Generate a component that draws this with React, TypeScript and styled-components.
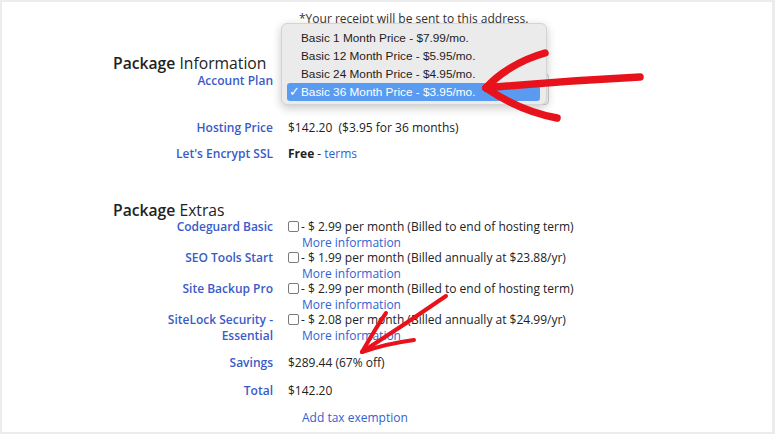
import React from 'react';
import styled, { createGlobalStyle } from 'styled-components';

const GlobalStyle = createGlobalStyle`
    html, body {
        margin: 0;
        padding: 0;
        background: #fff;
    }
    body {
        font-family: "Open Sans", "Liberation Sans", sans-serif;
        color: #222;
    }
`;

const Frame = styled.div`
    position: relative;
    width: 775px;
    height: 434px;
    box-sizing: border-box;
    border-style: solid;
    border-color: #ececec;
    border-width: 2px 3px 2px 2px;
    background: #fff;
    overflow: hidden;
`;

const Content = styled.div`
    padding: 9px 0 0 111px;
    font-size: 12px;
`;

const Row = styled.div<{ $gap?: number; $lh?: number }>`
    display: grid;
    grid-template-columns: 160px 1fr;
    column-gap: 15px;
    margin-top: ${p => p.$gap || 0}px;
    line-height: ${p => p.$lh || 16}px;
`;

const Label = styled.div`
    text-align: right;
    font-weight: 600;
    color: #3a5bc7;
`;

const Value = styled.div`
    color: #222;
`;

const Note = styled.div`
    padding-left: 11px;
    color: #333;
`;

const Heading = styled.h2<{ $gap: number }>`
    margin: ${p => p.$gap}px 0 0 0;
    font-size: 15.7px;
    line-height: 18px;
    font-weight: 400;
    color: #222;

    b {
        font-weight: 600;
    }
`;

const Link = styled.a`
    color: #2f63cf;
    text-decoration: none;
`;

const SelectWrap = styled.div`
    position: relative;
    width: 265px;
    height: 32px;
    margin-left: -4px;
`;

const SelectBox = styled.div`
    box-sizing: border-box;
    height: 100%;
    border: 1px solid #cfcfcf;
    border-radius: 4px;
    background: #fafafa;
    display: flex;
    align-items: center;
    justify-content: flex-end;
    padding-right: 2px;
    font-size: 9px;
`;

const Menu = styled.ul`
    position: absolute;
    top: -50px;
    left: -3px;
    width: 266px;
    box-sizing: border-box;
    margin: 0;
    padding: 5px 6px 3px 5px;
    list-style: none;
    background: #ecebec;
    border: 1px solid #d4d4d4;
    border-radius: 6px;
    box-shadow: 0 3px 10px rgba(0, 0, 0, 0.22);
    font-family: "Liberation Sans", Arial, sans-serif;
    font-size: 11.8px;
`;

const MenuItem = styled.li<{ $selected?: boolean }>`
    position: relative;
    height: 18px;
    line-height: 18px;
    padding-left: 14px;
    border-radius: 3px;
    color: ${p => (p.$selected ? '#fff' : '#1c1c1c')};
    background: ${p => (p.$selected ? '#5a9bf2' : 'transparent')};
`;

const Check = styled.span`
    position: absolute;
    left: 2px;
    top: 0;
    font-size: 12.5px;
`;

const ExtraLine = styled.div`
    display: flex;
    align-items: center;
`;

const Checkbox = styled.span`
    flex: none;
    width: 11px;
    height: 11px;
    box-sizing: border-box;
    border: 1px solid #7a7a7a;
    border-radius: 2px;
    margin-right: 2px;
    background: #fff;
`;

const MoreInfo = styled(Link)`
    display: block;
    padding-left: 14px;
`;

const Annotations = styled.svg`
    position: absolute;
    left: -2px;
    top: -2px;
    pointer-events: none;
`;

type Extra = {
    name: React.ReactNode;
    text: string;
};

const extras: Extra[] = [
    { name: 'Codeguard Basic', text: '- $ 2.99 per month (Billed to end of hosting term)' },
    { name: 'SEO Tools Start', text: '- $ 1.99 per month (Billed annually at $23.88/yr)' },
    { name: 'Site Backup Pro', text: '- $ 2.99 per month (Billed to end of hosting term)' },
    { name: <>SiteLock Security -<br />Essential</>, text: '- $ 2.08 per month (Billed annually at $24.99/yr)' },
];

const plans = [
    'Basic 1 Month Price - $7.99/mo.',
    'Basic 12 Month Price - $5.95/mo.',
    'Basic 24 Month Price - $4.95/mo.',
    'Basic 36 Month Price - $3.95/mo.',
];

export default function App() {
    return (
        <>
            <GlobalStyle />
            <Frame>
                <Content>
                    <Row>
                        <div />
                        <Note>*Your receipt will be sent to this address.</Note>
                    </Row>
                    <Heading $gap={27}><b>Package</b> Information</Heading>
                    <Row $gap={1}>
                        <Label>Account Plan</Label>
                        <SelectWrap>
                            <SelectBox>•</SelectBox>
                            <Menu>
                                {plans.map((p, i) => (
                                    <MenuItem key={p} $selected={i === plans.length - 1}>
                                        {i === plans.length - 1 && <Check>✓</Check>}
                                        {p}
                                    </MenuItem>
                                ))}
                            </Menu>
                        </SelectWrap>
                    </Row>
                    <Row $gap={15}>
                        <Label>Hosting Price</Label>
                        <Value>$142.20&nbsp; ($3.95 for 36 months)</Value>
                    </Row>
                    <Row $gap={10}>
                        <Label>Let's Encrypt SSL</Label>
                        <Value><b>Free</b> - <Link>terms</Link></Value>
                    </Row>
                    <Heading $gap={39}><b>Package</b> Extras</Heading>
                    {extras.map((e, i) => (
                        <Row key={i} $lh={15.5}>
                            <Label>{e.name}</Label>
                            <Value>
                                <ExtraLine>
                                    <Checkbox />
                                    {e.text}
                                </ExtraLine>
                                <MoreInfo>More information</MoreInfo>
                            </Value>
                        </Row>
                    ))}
                    <Row $gap={12}>
                        <Label>Savings</Label>
                        <Value>$289.44 (67% off)</Value>
                    </Row>
                    <Row $gap={12}>
                        <Label>Total</Label>
                        <Value>$142.20</Value>
                    </Row>
                    <Row $gap={11}>
                        <div />
                        <MoreInfo>Add tax exemption</MoreInfo>
                    </Row>
                </Content>
                <Annotations width="775" height="434" viewBox="0 0 775 434" fill="none" stroke="#e8121c" strokeLinecap="round" strokeLinejoin="round">
                    <g strokeWidth="7.5">
                        <path d="M640 77 C 600 79, 540 83, 486 88" />
                        <path d="M545 53 C 520 60, 498 74, 486 88" />
                        <path d="M486 88 C 505 101, 530 113, 557 118" />
                    </g>
                    <g strokeWidth="4">
                        <path d="M446 296 C 420 314, 390 334, 362 352" />
                        <path d="M386 313 C 377 326, 369 340, 362 352" />
                        <path d="M362 352 C 380 346, 398 342, 414 340" />
                    </g>
                </Annotations>
            </Frame>
        </>
    );
}
